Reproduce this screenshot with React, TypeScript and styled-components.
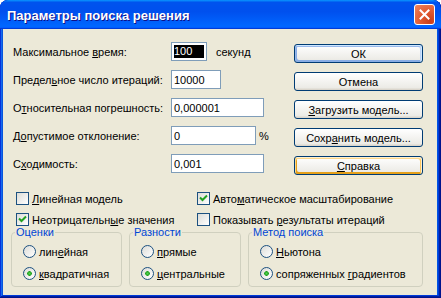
import React from "react";
import styled, { createGlobalStyle, css } from "styled-components";

const GlobalStyle = createGlobalStyle`
	html, body {
		margin: 0;
		padding: 0;
		background: #ffffff;
	}
	body {
		font-family: "Liberation Sans", Arial, sans-serif;
		font-size: 11px;
		color: #000;
	}
`;

type FieldDef = { label: React.ReactNode; value: string; width: number; suffix?: string; selected?: boolean };

const fields: FieldDef[] = [
	{ label: <>Максимальное <u>в</u>ремя:</>, value: "100", width: 36, suffix: "секунд", selected: true },
	{ label: <>Предел<u>ь</u>ное число итераций:</>, value: "10000", width: 50 },
	{ label: <>О<u>т</u>носительная погрешность:</>, value: "0,000001", width: 93 },
	{ label: <>Д<u>о</u>пустимое отклонение:</>, value: "0", width: 85, suffix: "%" },
	{ label: <>С<u>х</u>одимость:</>, value: "0,001", width: 93 },
];

const buttons: { label: React.ReactNode; kind?: "default" | "hot" }[] = [
	{ label: "ОК", kind: "default" },
	{ label: "Отмена" },
	{ label: <><u>З</u>агрузить модель...</> },
	{ label: <>Сохр<u>а</u>нить модель...</> },
	{ label: <><u>С</u>правка</>, kind: "hot" },
];

const checks: { label: React.ReactNode; checked: boolean }[] = [
	{ label: <><u>Л</u>инейная модель</>, checked: false },
	{ label: <>Авто<u>м</u>атическое масштабирование</>, checked: true },
	{ label: <>Неотрицательн<u>ы</u>е значения</>, checked: true },
	{ label: <>Показывать <u>р</u>езультаты итераций</>, checked: false },
];

const groups: { title: string; width: number; options: React.ReactNode[] }[] = [
	{ title: "Оценки", width: 111, options: [<>лин<u>е</u>йная</>, <><u>к</u>вадратичная</>] },
	{ title: "Разности", width: 112, options: [<><u>п</u>рямые</>, <><u>ц</u>ентральные</>] },
	{ title: "Метод поиска", width: 175, options: [<><u>Н</u>ьютона</>, <>сопряженных <u>г</u>радиентов</>] },
];

const CheckMark = () => (
	<svg width="9" height="9" viewBox="0 0 9 9">
		<path d="M1 3.5 L3.5 6 L8 1.5" fill="none" stroke="#21a121" strokeWidth="2" />
	</svg>
);

const App = () => {
	return (
		<>
			<GlobalStyle />
			<Window>
				<TitleBar>
					<Title>Параметры поиска решения</Title>
					<CloseButton>
						<svg width="11" height="11" viewBox="0 0 11 11">
							<path d="M1.5 1.5 L9.5 9.5 M9.5 1.5 L1.5 9.5" stroke="#fff" strokeWidth="2" strokeLinecap="square" />
						</svg>
					</CloseButton>
				</TitleBar>
				<Body>
					<Top>
						<Fields>
							{fields.map((f, i) => (
								<FieldRow key={i}>
									<FieldLabel>{f.label}</FieldLabel>
									<TextBox $width={f.width}>
										{f.selected ? <Selected>{f.value}</Selected> : f.value}
									</TextBox>
									{f.suffix && <Suffix $wide={f.suffix.length > 1}>{f.suffix}</Suffix>}
								</FieldRow>
							))}
						</Fields>
						<Buttons>
							{buttons.map((b, i) => (
								<Button key={i} $kind={b.kind}>
									{b.label}
								</Button>
							))}
						</Buttons>
					</Top>
					<Checks>
						{checks.map((c, i) => (
							<CheckRow key={i}>
								<CheckBox>{c.checked && <CheckMark />}</CheckBox>
								<span>{c.label}</span>
							</CheckRow>
						))}
					</Checks>
					<Groups>
						{groups.map((g, i) => (
							<Group key={i} $width={g.width}>
								<Legend>{g.title}</Legend>
								<RadioList>
									{g.options.map((o, j) => (
										<RadioRow key={j}>
											<Radio $checked={j === 1} />
											<span>{o}</span>
										</RadioRow>
									))}
								</RadioList>
							</Group>
						))}
					</Groups>
				</Body>
			</Window>
		</>
	);
};

export default App;

const Window = styled.div`
	width: 441px;
	height: 298px;
	box-sizing: border-box;
	display: flex;
	flex-direction: column;
	background: #0054e3;
	border-radius: 8px 8px 0 0;
	padding: 0 4px 3px 3px;
	box-shadow: inset -1px -1px #00138c, inset 1px 1px #0831d9, inset -2px -2px #001ea0,
		inset 2px 2px #166aee, inset -3px -3px #003bda, inset 3px 3px #0855dd;
	overflow: hidden;
`;

const TitleBar = styled.div`
	height: 29px;
	margin: 0 -4px 0 -3px;
	padding: 0 7px 0 7px;
	display: flex;
	align-items: center;
	justify-content: space-between;
	border-radius: 8px 8px 0 0;
	background: linear-gradient(
		180deg,
		#0997ff,
		#0053ee 8%,
		#0050ee 40%,
		#06f 88%,
		#06f 93%,
		#005bff 95%,
		#003dd7 96%,
		#003dd7
	);
`;

const Title = styled.span`
	font-family: "Liberation Sans", Arial, sans-serif;
	font-weight: bold;
	font-size: 13px;
	color: #fff;
	letter-spacing: 0;
	text-shadow: 1px 1px #0f1089;
	padding-top: 1px;
`;

const CloseButton = styled.div`
	width: 21px;
	height: 21px;
	box-sizing: border-box;
	border: 1px solid #fff;
	border-radius: 3px;
	display: flex;
	align-items: center;
	justify-content: center;
	margin-right: -1px;
	background: radial-gradient(circle at 80% 85%, #c83e1a 0%, #e25a30 45%, #ee8560 100%);
`;

const Body = styled.div`
	flex: 1;
	background: #ece9d8;
	display: flex;
	flex-direction: column;
`;

const Top = styled.div`
	display: flex;
	padding: 13px 14px 0 10px;
`;

const Fields = styled.div`
	display: flex;
	flex-direction: column;
	gap: 9px;
`;

const FieldRow = styled.div`
	display: flex;
	align-items: center;
	height: 19px;
`;

const FieldLabel = styled.span`
	width: 158px;
	flex-shrink: 0;
`;

const TextBox = styled.div<{ $width: number }>`
	width: ${({ $width }) => $width}px;
	height: 19px;
	box-sizing: border-box;
	border: 1px solid #7f9db9;
	background: #fff;
	padding: 0 2px;
	display: flex;
	align-items: center;
`;

const Selected = styled.span`
	background: #000;
	color: #fff;
	padding-right: 12px;
	line-height: 13px;
`;

const Suffix = styled.span<{ $wide: boolean }>`
	margin-left: ${({ $wide }) => ($wide ? "9px" : "3px")};
`;

const Buttons = styled.div`
	margin-left: auto;
	padding-top: 2px;
	display: flex;
	flex-direction: column;
	gap: 9px;
`;

const Button = styled.div<{ $kind?: "default" | "hot" }>`
	width: 129px;
	height: 19px;
	box-sizing: border-box;
	border: 1px solid #003c74;
	border-radius: 3px;
	background: linear-gradient(180deg, #fff, #ecebe6 86%, #d6d0c5);
	display: flex;
	align-items: center;
	justify-content: center;
	${({ $kind }) =>
		$kind === "default" &&
		css`
			box-shadow: inset -1px 1px #cee7ff, inset 1px 2px #98b8ea, inset -2px 2px #bcd4f6,
				inset 1px -1px #89ade4, inset 2px -2px #89ade4;
		`}
	${({ $kind }) =>
		$kind === "hot" &&
		css`
			box-shadow: inset -1px 1px #fff0cf, inset 1px 2px #fdd889, inset -2px 2px #fbc761,
				inset 2px -2px #e5a01a;
		`}
`;

const Checks = styled.div`
	display: grid;
	grid-template-columns: 181px auto;
	row-gap: 8px;
	padding: 17px 0 0 13px;
`;

const CheckRow = styled.div`
	display: flex;
	align-items: center;
	gap: 3px;
	height: 13px;
`;

const CheckBox = styled.div`
	width: 13px;
	height: 13px;
	box-sizing: border-box;
	border: 1px solid #1c5180;
	background: linear-gradient(135deg, #dcdcd7, #fff);
	display: flex;
	align-items: center;
	justify-content: center;
	flex-shrink: 0;
`;

const Groups = styled.div`
	display: flex;
	gap: 7px;
	padding: 0 0 0 8px;
`;

const Group = styled.fieldset<{ $width: number }>`
	width: ${({ $width }) => $width}px;
	height: 61px;
	box-sizing: border-box;
	margin: 0;
	padding: 6px 0 0 0;
	border: 1px solid #d0d0bf;
	border-radius: 4px;
`;

const Legend = styled.legend`
	color: #0046d5;
	padding: 0 1px;
	margin: 0 0 0 3px;
	line-height: 13px;
`;

const RadioList = styled.div`
	display: flex;
	flex-direction: column;
	gap: 9px;
	padding-left: 11px;
`;

const RadioRow = styled.div`
	display: flex;
	align-items: center;
	gap: 3px;
	height: 13px;
`;

const Radio = styled.div<{ $checked: boolean }>`
	width: 13px;
	height: 13px;
	box-sizing: border-box;
	border-radius: 50%;
	border: 1px solid #1c5180;
	background: ${({ $checked }) =>
		$checked
			? "radial-gradient(circle at 50% 50%, #55d551 0, #21a121 2px, transparent 2.6px), linear-gradient(135deg, #dcdcd7, #fff)"
			: "linear-gradient(135deg, #dcdcd7, #fff)"};
	flex-shrink: 0;
`;
